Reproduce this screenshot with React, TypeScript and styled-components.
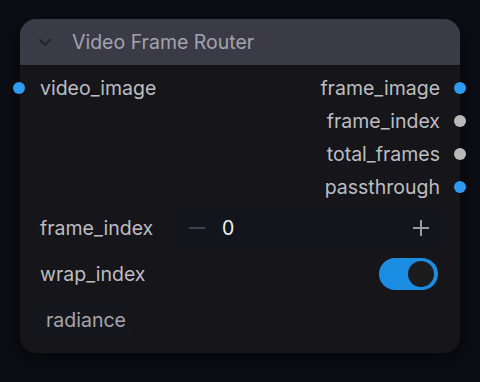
import React from "react";
import styled, { createGlobalStyle } from "styled-components";

type Slot = {
  name: string;
  color: string;
};

const outputs: Slot[] = [
  { name: "frame_image", color: "#2d9cf0" },
  { name: "frame_index", color: "#b8b8b8" },
  { name: "total_frames", color: "#b8b8b8" },
  { name: "passthrough", color: "#2d9cf0" },
];

const App: React.FC = () => {
  return (
    <>
      <GlobalStyle />
      <Canvas>
        <Node>
          <NodeHeader>
            <Chevron viewBox="0 0 16 16">
              <path d="M3.5 6 L8 10.5 L12.5 6" />
            </Chevron>
            <NodeTitle>Video Frame Router</NodeTitle>
          </NodeHeader>
          <NodeBody>
            <SlotArea>
              <InputCol>
                <SlotRow>
                  <Dot $color="#2d9cf0" $side="left" />
                  <SlotLabel>video_image</SlotLabel>
                </SlotRow>
              </InputCol>
              <OutputCol>
                {outputs.map((o) => (
                  <SlotRow key={o.name}>
                    <SlotLabel>{o.name}</SlotLabel>
                    <Dot $color={o.color} $side="right" />
                  </SlotRow>
                ))}
              </OutputCol>
            </SlotArea>
            <WidgetRow>
              <WidgetLabel>frame_index</WidgetLabel>
              <NumberInput>
                <StepButton $dim>
                  <svg viewBox="0 0 20 20" width="20" height="20">
                    <path d="M2 10 H18" />
                  </svg>
                </StepButton>
                <NumberValue>0</NumberValue>
                <StepButton>
                  <svg viewBox="0 0 20 20" width="20" height="20">
                    <path d="M2 10 H18 M10 2 V18" />
                  </svg>
                </StepButton>
              </NumberInput>
            </WidgetRow>
            <ToggleRow>
              <WidgetLabel>wrap_index</WidgetLabel>
              <Toggle>
                <Knob />
              </Toggle>
            </ToggleRow>
            <Badge>radiance</Badge>
          </NodeBody>
        </Node>
      </Canvas>
    </>
  );
};

const GlobalStyle = createGlobalStyle`
  html, body {
    margin: 0;
    padding: 0;
    background: #0b0d14;
    font-family: Inter, "Noto Sans", sans-serif;
  }
`;

const Canvas = styled.div`
  width: 480px;
  height: 382px;
  padding: 19px 20px 0;
  box-sizing: border-box;
  background: #0b0d14;
`;

const Node = styled.div`
  width: 440px;
  border-radius: 16px;
  background: #161519;
  box-shadow: 0 6px 18px rgba(0, 0, 0, 0.55);
  position: relative;
`;

const NodeHeader = styled.div`
  height: 46px;
  display: flex;
  align-items: center;
  padding-left: 16px;
  background: #3b3b47;
  border-radius: 16px 16px 0 0;
  border-bottom: 1px solid #121116;
`;

const Chevron = styled.svg`
  width: 18px;
  height: 18px;
  fill: none;
  stroke: #23232c;
  stroke-width: 1.8;
  stroke-linecap: round;
  stroke-linejoin: round;
  margin-right: 18px;
`;

const NodeTitle = styled.span`
  font-size: 19.5px;
  color: #a3a3ad;
`;

const NodeBody = styled.div`
  padding: 5px 20px 14px;
  display: flex;
  flex-direction: column;
`;

const SlotArea = styled.div`
  display: flex;
  justify-content: space-between;
`;

const InputCol = styled.div`
  display: flex;
  flex-direction: column;
`;

const OutputCol = styled.div`
  display: flex;
  flex-direction: column;
  align-items: flex-end;
`;

const SlotRow = styled.div`
  height: 33px;
  display: flex;
  align-items: center;
  position: relative;
`;

const SlotLabel = styled.span`
  font-size: 19.5px;
  color: #bdbdc2;
`;

const Dot = styled.span<{ $color: string; $side: "left" | "right" }>`
  position: absolute;
  top: 50%;
  ${({ $side }) => ($side === "left" ? "left: -27px;" : "right: -26px;")}
  width: 12px;
  height: 12px;
  margin-top: -6px;
  border-radius: 50%;
  background: ${({ $color }) => $color};
`;

const WidgetRow = styled.div`
  margin-top: 5px;
  height: 40px;
  display: flex;
  align-items: center;
`;

const WidgetLabel = styled.span`
  font-size: 19.5px;
  color: #bdbdc2;
  flex: 1;
`;

const NumberInput = styled.div`
  width: 263px;
  height: 40px;
  border-radius: 8px;
  background: #12151c;
  display: flex;
  align-items: center;
  padding: 0 9px 0 10px;
  box-sizing: border-box;
`;

const StepButton = styled.span<{ $dim?: boolean }>`
  display: flex;
  svg {
    fill: none;
    stroke: ${({ $dim }) => ($dim ? "#3f434c" : "#9a9ca2")};
    stroke-width: 2;
  }
  &:last-child {
    margin-left: auto;
  }
`;

const NumberValue = styled.span`
  font-size: 19.5px;
  color: #f2f2f2;
  margin-left: 15px;
`;

const ToggleRow = styled.div`
  margin-top: 6px;
  height: 40px;
  display: flex;
  align-items: center;
`;

const Toggle = styled.div`
  width: 59px;
  height: 32px;
  border-radius: 16px;
  background: #1b8de2;
  display: flex;
  align-items: center;
  justify-content: flex-end;
  padding-right: 4px;
  box-sizing: border-box;
  margin-right: 2px;
`;

const Knob = styled.div`
  width: 26px;
  height: 26px;
  border-radius: 50%;
  background: #1c1c1e;
`;

const Badge = styled.span`
  align-self: flex-start;
  margin-top: 9px;
  margin-left: -7px;
  padding: 5px 10px 7px 13px;
  border-radius: 10px;
  background: #15171d;
  font-size: 19.5px;
  color: #a5a5aa;
`;

export default App;
